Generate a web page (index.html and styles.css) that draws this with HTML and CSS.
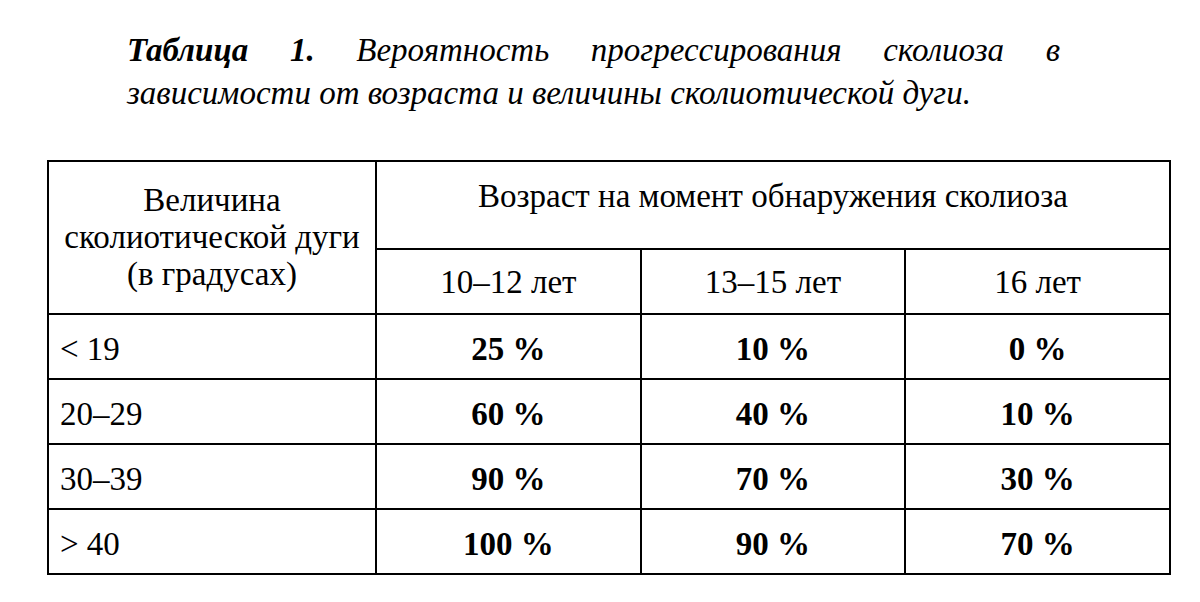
FILE: index.html
```html
<!DOCTYPE html>
<html lang="ru">
<head>
<meta charset="utf-8">
<link rel="stylesheet" href="styles.css">
</head>
<body>
<div class="page">
  <p class="caption"><b>Таблица 1.</b> Вероятность прогрессирования сколиоза в зависимости от возраста и величины сколиотической дуги.</p>
  <table class="data">
    <tr class="h1">
      <th rowspan="2" class="c1">Величина<br>сколиотической дуги<br>(в градусах)</th>
      <th colspan="3" class="age">Возраст на момент обнаружения сколиоза</th>
    </tr>
    <tr class="h2">
      <th>10–12 лет</th>
      <th>13–15 лет</th>
      <th>16 лет</th>
    </tr>
    <tr><td class="lbl">&lt; 19</td><td>25 %</td><td>10 %</td><td>0 %</td></tr>
    <tr><td class="lbl">20–29</td><td>60 %</td><td>40 %</td><td>10 %</td></tr>
    <tr><td class="lbl">30–39</td><td>90 %</td><td>70 %</td><td>30 %</td></tr>
    <tr><td class="lbl">&gt; 40</td><td>100 %</td><td>90 %</td><td>70 %</td></tr>
  </table>
</div>
</body>
</html>
```

FILE: styles.css
```css
html, body {
  margin: 0;
  padding: 0;
  background: #fff;
}
.page {
  width: 1200px;
  height: 602px;
  padding-top: 29px;
  box-sizing: border-box;
  font-family: "Liberation Serif", "Times New Roman", serif;
  color: #000;
}
.caption {
  margin: 0 0 0 127px;
  width: 933px;
  font-style: italic;
  font-size: 33px;
  line-height: 43px;
  text-align: justify;
}
.caption b {
  font-weight: bold;
}
.data {
  margin: 45px 0 0 47px;
  width: 1124px;
  border-collapse: collapse;
  table-layout: fixed;
  font-size: 33px;
}
.data th, .data td {
  border: 2px solid #000;
  padding: 0;
  font-weight: normal;
  text-align: center;
  vertical-align: middle;
  line-height: 37px;
}
.data th.c1 {
  width: 326px;
}
.data th.age {
  height: 70px;
  vertical-align: top;
  padding-top: 16px;
}
.data tr.h2 th {
  height: 65px;
  padding-top: 2px;
  box-sizing: border-box;
}
.data td {
  height: 65px;
  font-weight: bold;
  padding-top: 6px;
  box-sizing: border-box;
}
.data td.lbl {
  font-weight: normal;
  text-align: left;
  padding-left: 11px;
}
```
